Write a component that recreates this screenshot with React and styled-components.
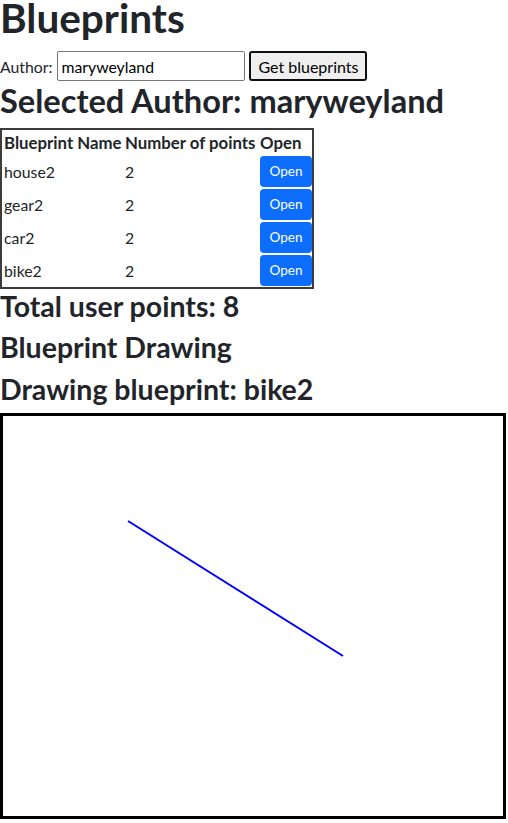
import React from "react";
import styled, { createGlobalStyle } from "styled-components";

const GlobalStyle = createGlobalStyle`
  *, *::before, *::after { box-sizing: border-box; }
  html, body { margin: 0; padding: 0; background: #fff; }
  body {
    font-family: "Lato", "Noto Sans", sans-serif;
    font-size: 15.8px;
    color: #212529;
  }
`;

const Page = styled.div`
  display: flex;
  flex-direction: column;
  align-items: flex-start;
`;

const Title = styled.h1`
  margin: 0 0 15px;
  font-size: 40.5px;
  line-height: 36px;
  font-weight: 700;
`;

const AuthorForm = styled.div`
  display: flex;
  align-items: center;
  height: 30px;
`;

const Label = styled.label`
  font-size: 15.8px;
  line-height: 19px;
`;

const TextInput = styled.input`
  width: 188px;
  height: 30px;
  margin-left: 5px;
  padding: 0 3px;
  border: 1px solid #767676;
  border-radius: 2px;
  font-family: inherit;
  font-size: 15.8px;
  color: #000;
  background: #fff;
  outline: none;
`;

const PlainButton = styled.button`
  height: 30px;
  margin-left: 4px;
  padding: 0 7px;
  border: 2px solid #101010;
  border-radius: 3px;
  background: #efefef;
  font-family: inherit;
  font-size: 16px;
  color: #000;
`;

const SubTitle = styled.h2`
  margin: 0 0 7.5px;
  font-size: 32.6px;
  line-height: 39px;
  font-weight: 700;
`;

const Table = styled.table`
  width: 314px;
  table-layout: fixed;
  border-collapse: separate;
  border-spacing: 0;
  border: 2px solid #3c3c3c;
`;

const HeadCell = styled.th`
  width: ${(p) => p.$w}px;
  height: 25px;
  padding: 0 0 0 2px;
  text-align: left;
  font-size: 16.8px;
  line-height: 25px;
  font-weight: 700;
  white-space: nowrap;
`;

const Cell = styled.td`
  height: 33px;
  padding: 1px 0 1px 2px;
  vertical-align: middle;
  font-size: 15.8px;
  line-height: 19px;
`;

const OpenButton = styled.button`
  display: block;
  width: 52px;
  height: 31px;
  padding: 0;
  border: none;
  border-radius: 4px;
  background: #0d6efd;
  color: #fff;
  font-family: inherit;
  font-size: 13.5px;
`;

const Section = styled.h3`
  margin: 0 0 7.5px;
  font-size: 28.5px;
  line-height: 34px;
  font-weight: 700;
`;

const CanvasFrame = styled.div`
  width: 506px;
  height: 406px;
  border: 3px solid #000;
  background: #fff;
`;

const Drawing = styled.svg`
  display: block;
  width: 500px;
  height: 400px;
`;

const blueprints = [
  { name: "house2", points: 2 },
  { name: "gear2", points: 2 },
  { name: "car2", points: 2 },
  { name: "bike2", points: 2 },
];

const selected = {
  name: "bike2",
  points: [
    { x: 125, y: 105 },
    { x: 340, y: 240 },
  ],
};

export default function App() {
  const total = blueprints.reduce((s, b) => s + b.points, 0);
  const path = selected.points.map((p, i) => `${i ? "L" : "M"}${p.x} ${p.y}`).join(" ");
  return (
    <>
      <GlobalStyle />
      <Page>
        <Title>Blueprints</Title>
        <AuthorForm>
          <Label htmlFor="author">Author:</Label>
          <TextInput id="author" defaultValue="maryweyland" />
          <PlainButton>Get blueprints</PlainButton>
        </AuthorForm>
        <SubTitle>Selected Author: maryweyland</SubTitle>
        <Table>
          <thead>
            <tr>
              <HeadCell $w={121}>Blueprint Name</HeadCell>
              <HeadCell $w={135}>Number of points</HeadCell>
              <HeadCell $w={54}>Open</HeadCell>
            </tr>
          </thead>
          <tbody>
            {blueprints.map((b) => (
              <tr key={b.name}>
                <Cell>{b.name}</Cell>
                <Cell>{b.points}</Cell>
                <Cell>
                  <OpenButton>Open</OpenButton>
                </Cell>
              </tr>
            ))}
          </tbody>
        </Table>
        <Section>Total user points: {total}</Section>
        <Section>Blueprint Drawing</Section>
        <Section>Drawing blueprint: {selected.name}</Section>
        <CanvasFrame>
          <Drawing viewBox="0 0 500 400">
            <path d={path} stroke="#0000ff" strokeWidth="2" fill="none" />
          </Drawing>
        </CanvasFrame>
      </Page>
    </>
  );
}
